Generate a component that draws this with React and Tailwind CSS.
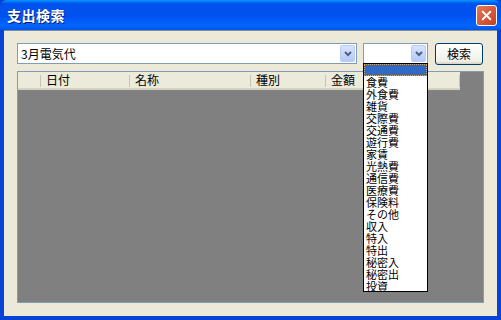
import { X } from 'lucide-react';

const FONT = "font-['Noto_Sans_CJK_JP','Noto_Sans',sans-serif]";

const KINDS = [
  '', '食費', '外食費', '雑貨', '交際費', '交通費', '遊行費', '家賃', '光熱費',
  '通信費', '医療費', '保険料', 'その他', '収入', '特入', '特出', '秘密入', '秘密出', '投資',
];

const COLUMNS = [
  { label: '', w: 'w-[23px]' },
  { label: '日付', w: 'w-[89px]' },
  { label: '名称', w: 'w-[121px]' },
  { label: '種別', w: 'w-[75px]' },
  { label: '金額', w: 'w-[134px]' },
];

function ComboArrow() {
  return (
    <div className="w-[15px] h-[17px] rounded-[2px] border border-[#b9ccf5] bg-[linear-gradient(#d8e4fd,#b4c9f6)] flex items-center justify-center">
      <svg width="8" height="6" viewBox="0 0 8 6">
        <path d="M1 1 L4 4 L7 1" stroke="#4d6185" strokeWidth="2" fill="none" />
      </svg>
    </div>
  );
}

export default function App() {
  return (
    <div className={`${FONT} relative w-[501px] h-[320px] flex flex-col bg-[#0843d6] overflow-hidden`}>
      {/* Title bar */}
      <div className="h-[30px] shrink-0 flex items-center justify-between pl-[7px] pr-[4px] rounded-t-[7px] bg-[linear-gradient(#0997ff_0%,#0053ee_12%,#0050ee_50%,#0066ff_85%,#0055e5_100%)]">
        <span className="text-white text-[14px] font-bold leading-none tracking-[0.5px] [text-shadow:1px_1px_0_#0a1e6e]">支出検索</span>
        <div className="w-[21px] h-[21px] rounded-[3px] border border-white bg-[linear-gradient(135deg,#e5785a,#c8401e)] flex items-center justify-center">
          <X size={15} strokeWidth={3} className="text-white" />
        </div>
      </div>

      {/* Client area */}
      <div className="flex-1 mx-[4px] mb-[4px] bg-[#ece9d8] border-t border-[#7f8aa6] px-[13px] pt-[12px] pb-[13px] flex flex-col gap-[7px]">
        <div className="flex items-center h-[21px]">
          <div className="w-[340px] h-[21px] bg-white border border-[#7f9db9] flex items-center justify-between pl-[3px] pr-[1px]">
            <span className="text-[12px] leading-none text-black">3月電気代</span>
            <ComboArrow />
          </div>
          <div className="ml-[6px] w-[65px] h-[21px] bg-white border border-[#7f9db9] flex items-center justify-end pr-[1px]">
            <ComboArrow />
          </div>
          <div className="ml-[7px] w-[48px] h-[22px] rounded-[3px] border border-[#003c74] bg-[linear-gradient(#ffffff,#f0f0ea_85%,#d6d0c5)] flex items-center justify-center">
            <span className="text-[12px] leading-none text-black">検索</span>
          </div>
        </div>

        {/* List view */}
        <div className="flex-1 border border-[#7f9db9] bg-[#808080] flex flex-col">
          <div className="h-[18px] flex">
            {COLUMNS.map((c, i) => (
              <div
                key={i}
                className={`${c.w} h-full bg-[#ebeadb] border-b-2 border-[#d6d2c2] flex items-center ${i > 0 ? 'pl-[5px]' : ''} relative`}
              >
                <span className="text-[12px] leading-none text-black">{c.label}</span>
                <div className="absolute right-0 top-[3px] w-[1px] h-[12px] bg-[#c7c5b2]" />
              </div>
            ))}
          </div>
        </div>
      </div>

      {/* Open dropdown */}
      <div className="absolute left-[363px] top-[63px] w-[65px] h-[229px] bg-white border border-black flex flex-col overflow-hidden">
        {KINDS.map((k, i) => (
          <div
            key={i}
            className={`h-[12px] shrink-0 pl-[2px] text-[11px] leading-[12px] text-black whitespace-nowrap overflow-hidden ${i === 0 ? 'bg-[#316ac5] outline-1 outline-dotted outline-[#e8a33a] -outline-offset-1' : ''}`}
          >
            {k}
          </div>
        ))}
      </div>
    </div>
  );
}
